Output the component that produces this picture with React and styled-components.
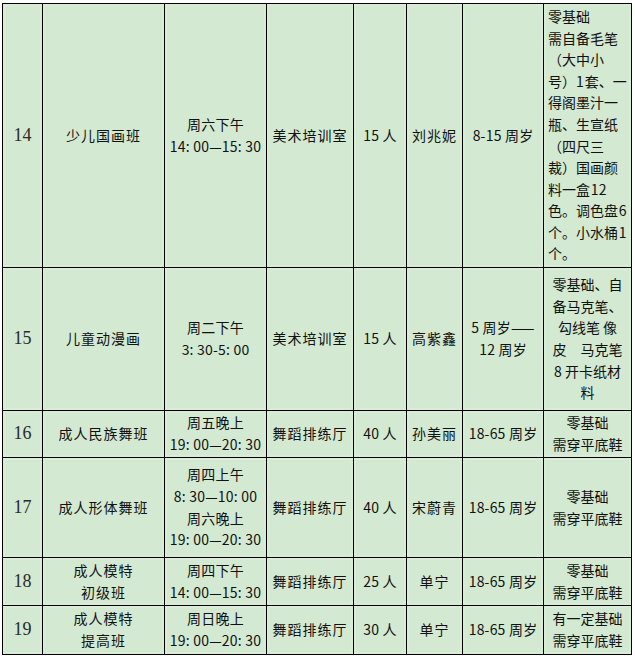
import React from 'react'
import styled, { createGlobalStyle } from 'styled-components'

const GlobalStyle = createGlobalStyle`
    html, body {
        margin: 0;
        padding: 0;
        background: #fff;
    }
    body {
        font-family: "Noto Sans CJK SC", "Noto Sans", sans-serif;
        color: #111;
    }
`

const rows = [
    {
        no: '14',
        height: 264,
        name: ['少儿国画班'],
        time: ['周六下午', '14: 00—15: 30'],
        room: '美术培训室',
        count: '15 人',
        teacher: '刘兆妮',
        age: ['8-15 周岁'],
        notes: ['零基础', '需自备毛笔', '（大中小', '号）1\u200a套、一', '得阁墨汁一', '瓶、生宣纸', '（四尺三', '裁）国画颜', '料一盒\u200a12', '色。调色盘\u200a6', '个。小水桶\u200a1', '个。'],
        notesAlign: 'left',
    },
    {
        no: '15',
        height: 143,
        name: ['儿童动漫画'],
        time: ['周二下午', '3: 30-5: 00'],
        room: '美术培训室',
        count: '15 人',
        teacher: '高紫鑫',
        age: ['5 周岁——', '12 周岁'],
        notes: ['零基础、自', '备马克笔、', '勾线笔 像', '皮\u3000马克笔', '8 开卡纸材', '料'],
        notesAlign: 'center',
    },
    {
        no: '16',
        height: 47,
        name: ['成人民族舞班'],
        time: ['周五晚上', '19: 00—20: 30'],
        room: '舞蹈排练厅',
        count: '40 人',
        teacher: '孙美丽',
        age: ['18-65 周岁'],
        notes: ['零基础', '需穿平底鞋'],
        notesAlign: 'center',
    },
    {
        no: '17',
        height: 100,
        name: ['成人形体舞班'],
        time: ['周四上午', '8: 30—10: 00', '周六晚上', '19: 00—20: 30'],
        room: '舞蹈排练厅',
        count: '40 人',
        teacher: '宋蔚青',
        age: ['18-65 周岁'],
        notes: ['零基础', '需穿平底鞋'],
        notesAlign: 'center',
    },
    {
        no: '18',
        height: 48,
        name: ['成人模特', '初级班'],
        time: ['周四下午', '14: 00—15: 30'],
        room: '舞蹈排练厅',
        count: '25 人',
        teacher: '单宁',
        age: ['18-65 周岁'],
        notes: ['零基础', '需穿平底鞋'],
        notesAlign: 'center',
    },
    {
        no: '19',
        height: 49,
        name: ['成人模特', '提高班'],
        time: ['周日晚上', '19: 00—20: 30'],
        room: '舞蹈排练厅',
        count: '30 人',
        teacher: '单宁',
        age: ['18-65 周岁'],
        notes: ['有一定基础', '需穿平底鞋'],
        notesAlign: 'center',
    },
]

const widths = [40, 122, 102, 87, 53, 56, 81, 88]

const Lines = ({ lines }) =>
    lines.map((line, i) => <Line key={i}>{line}</Line>)

const App = () => {
    return (
        <Page>
            <GlobalStyle />
            <Table>
                <colgroup>
                    {widths.map((w, i) => <col key={i} style={{ width: w }} />)}
                </colgroup>
                <tbody>
                    {rows.map(row => (
                        <tr key={row.no}>
                            <NumCell style={{ height: row.height }}>{row.no}</NumCell>
                            <Cell><Lines lines={row.name} /></Cell>
                            <Cell $digits><Lines lines={row.time} /></Cell>
                            <Cell>{row.room}</Cell>
                            <Cell $digits>{row.count}</Cell>
                            <Cell>{row.teacher}</Cell>
                            <Cell $digits><Lines lines={row.age} /></Cell>
                            <NoteCell $align={row.notesAlign}><Lines lines={row.notes} /></NoteCell>
                        </tr>
                    ))}
                </tbody>
            </Table>
        </Page>
    )
}

export default App

const Page = styled.div`
    padding: 3px 0 0 2px;
    width: 633px;
`

const Table = styled.table`
    border-collapse: collapse;
    table-layout: fixed;
    width: 629px;
    background: #d3e9d1;
    border: 1.5px solid #000;
`

const Cell = styled.td`
    border: 1px solid #000;
    padding: 0 2px;
    text-align: center;
    vertical-align: middle;
    font-size: 14px;
    line-height: 21.6px;
    letter-spacing: ${p => (p.$digits ? '0.2px' : '1px')};
    white-space: nowrap;
    box-sizing: border-box;
    box-shadow: inset 0 0 0 2px #d8ecd6;
`

const NumCell = styled(Cell)`
    font-family: "Liberation Serif", "DejaVu Serif", serif;
    font-size: 18px;
    letter-spacing: 0;
    color: #2a2a2a;
    padding-left: 2px;
`

const NoteCell = styled(Cell)`
    text-align: ${p => p.$align};
    padding: ${p => (p.$align === 'left' ? '0 0 0 4px' : '0 1px')};
    letter-spacing: 0;
    overflow: hidden;
`

const Line = styled.div`
    white-space: pre;
`
